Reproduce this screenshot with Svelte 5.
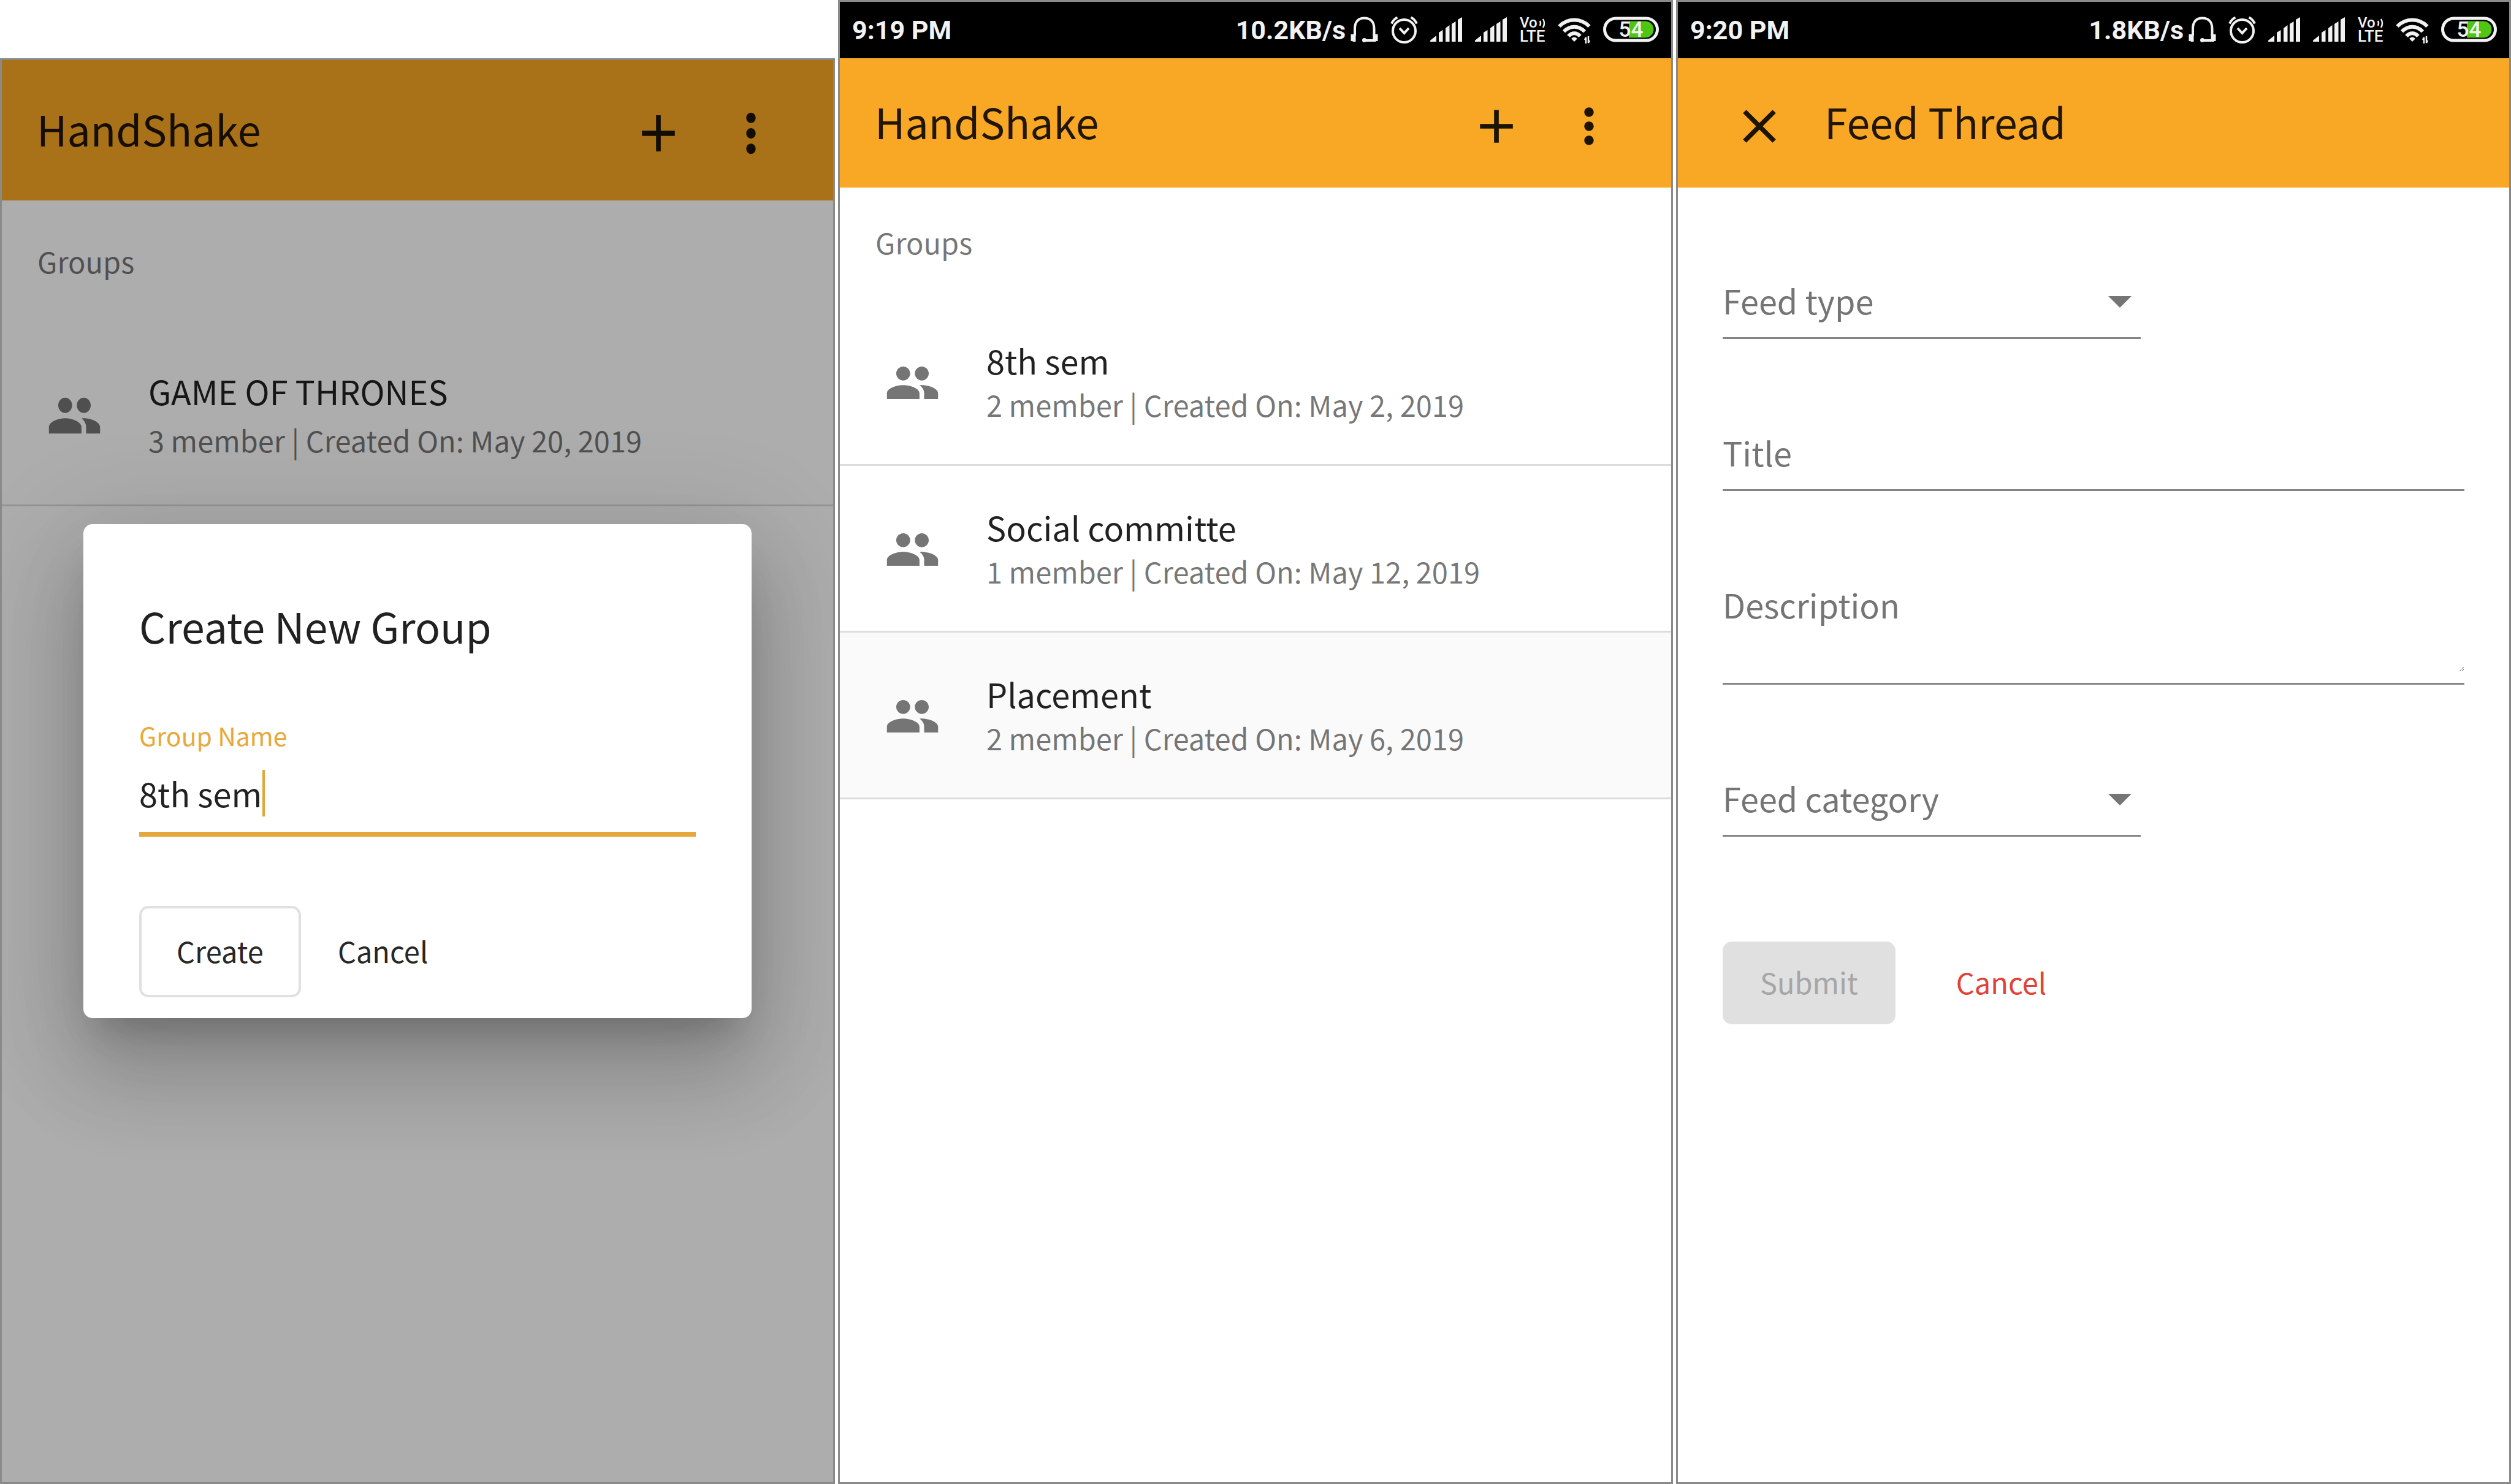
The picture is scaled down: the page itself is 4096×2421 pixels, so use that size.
<script>
  let groupName = $state('8th sem');
  let feedTitle = $state('');
  let description = $state('');

  const dialogGroups = [
    { name: 'GAME OF THRONES', members: 3, created: 'May 20, 2019' }
  ];

  const groups = [
    { name: '8th sem', members: 2, created: 'May 2, 2019' },
    { name: 'Social committe', members: 1, created: 'May 12, 2019' },
    { name: 'Placement', members: 2, created: 'May 6, 2019', active: true }
  ];
</script>

{#snippet statusBar(time, speed)}
  <div class="status">
    <span class="clock">{time}</span>
    <div class="tray">
      <span class="speed">{speed}</span>
      <svg width="45" height="46" viewBox="0 0 45 46" fill="none" stroke="#f2f2f2" stroke-width="4" aria-hidden="true">
        <path d="M7 32V21C7 9 13 3.500 22.500 3.500S38.500 9 38.500 21V32" />
        <path d="M2.500 30V41M42.500 30V41" />
        <path d="M6 30V42M39 30V42" stroke-width="5" />
        <path d="M22 40H38" />
        <circle cx="22.500" cy="39.500" r="3.500" fill="#f2f2f2" stroke="none" />
      </svg>
      <svg width="45" height="46" viewBox="0 0 45 46" fill="none" stroke="#f2f2f2" stroke-width="4" aria-hidden="true">
        <circle cx="22.500" cy="24.500" r="18.500" />
        <path d="M15 20L22.500 28L30 20" />
        <path d="M2 12.500C4 8 7 4.500 11.500 2.500M43 12.500C41 8 38 4.500 33.500 2.500" />
      </svg>
      {#each [0, 1] as sim (sim)}
        <svg width="53" height="46" viewBox="0 0 53 46" fill="#f2f2f2" aria-hidden="true">
          <path d="M0 42V40L10 32V42ZM14 42V27L20.500 23V42ZM25 42V20L31.500 15V42ZM35 42V13L41.500 9V42ZM45 42V6L52 2V42Z" />
        </svg>
      {/each}
      <svg class="volte" width="42" height="46" viewBox="0 0 42 46" fill="#f2f2f2" aria-hidden="true">
        <text x="0" y="19" font-size="24">Vo</text>
        <text x="0" y="42" font-size="26">LTE</text>
        <path d="M33 8Q35 12 33 16M38 5Q42 12 38 19" fill="none" stroke="#f2f2f2" stroke-width="2.500" />
      </svg>
      <svg width="54" height="46" viewBox="0 0 54 46" fill="none" stroke="#f2f2f2" stroke-width="6" aria-hidden="true">
        <path d="M2.500 17C16 3 38 3 51.500 17" />
        <path d="M10 25.500C20 15 34 15 44 25.500" />
        <path d="M17.500 33C23 26.500 31 26.500 36.500 33" />
        <path d="M27 42L22 37Q27 32 32 37Z" fill="#f2f2f2" stroke="none" />
        <path d="M44 39L46 35V45M50 33V44L52 40" stroke-width="2.500" />
      </svg>
      <svg class="battery" width="91" height="46" viewBox="0 0 91 46" aria-hidden="true">
        <path d="M42 8.500H69A13.500 13.500 0 0 1 69 35.500H42Z" fill="#4fc614" />
        <rect x="2.500" y="4" width="86" height="36" rx="18" fill="none" stroke="#f2f2f2" stroke-width="5" />
        <text x="45.500" y="34" text-anchor="middle" font-size="35" fill="#f2f2f2">54</text>
      </svg>
    </div>
  </div>
{/snippet}

{#snippet appBar()}
  <header class="appbar">
    <h1>HandShake</h1>
    <div class="actions">
      <button class="icon-button" aria-label="Add group">
        <svg class="glyph" viewBox="0 0 24 24" preserveAspectRatio="none"><path d="M19 13h-6v6h-2v-6H5v-2h6V5h2v6h6v2z" /></svg>
      </button>
      <button class="icon-button" aria-label="More options">
        <svg class="glyph" viewBox="0 0 24 24" preserveAspectRatio="none"><path d="M12 8c1.100 0 2-.9 2-2s-.9-2-2-2-2 .9-2 2 .9 2 2 2zm0 2c-1.100 0-2 .9-2 2s.9 2 2 2 2-.9 2-2-.9-2-2-2zm0 6c-1.100 0-2 .9-2 2s.9 2 2 2 2-.9 2-2-.9-2-2-2z" /></svg>
      </button>
    </div>
  </header>
{/snippet}

{#snippet groupList(items)}
  <h2 class="subheader">Groups</h2>
  <ul class="list">
    {#each items as g (g.name)}
      <li class="row" class:active={g.active}>
        <svg class="people" viewBox="0 0 24 24" preserveAspectRatio="none" aria-hidden="true"><path d="M16 11c1.660 0 2.990-1.340 2.990-3S17.660 5 16 5c-1.660 0-3 1.340-3 3s1.340 3 3 3zm-8 0c1.660 0 2.990-1.340 2.990-3S9.660 5 8 5C6.340 5 5 6.340 5 8s1.340 3 3 3zm0 2c-2.330 0-7 1.170-7 3.500V19h14v-2.500c0-2.330-4.670-3.500-7-3.500zm8 0c-.29 0-.62.020-.97.050 1.160.84 1.970 1.970 1.970 3.450V19h6v-2.500c0-2.330-4.670-3.500-7-3.500z" /></svg>
        <div class="row-text">
          <span class="name">{g.name}</span>
          <span class="meta">{g.members} member | Created On: {g.created}</span>
        </div>
      </li>
    {/each}
  </ul>
{/snippet}

{#snippet arrow()}
  <svg class="arrow" viewBox="0 0 38 24" aria-hidden="true"><path d="M0 5H38L19 24Z" fill="#757575" /></svg>
{/snippet}

<main class="board">
  <section class="screen tall">
    {@render appBar()}
    {@render groupList(dialogGroups)}
    <div class="backdrop">
      <form class="dialog" onsubmit={(e) => e.preventDefault()}>
        <h2>Create New Group</h2>
        <label for="group-name">Group Name</label>
        <div class="name-field">
          <input id="group-name" type="text" bind:value={groupName} />
          <span class="caret"></span>
        </div>
        <div class="dialog-actions">
          <button class="outlined" type="submit">Create</button>
          <button type="button">Cancel</button>
        </div>
      </form>
    </div>
  </section>

  <section class="screen">
    {@render statusBar('9:19 PM', '10.2KB/s')}
    {@render appBar()}
    {@render groupList(groups)}
  </section>

  <section class="screen">
    {@render statusBar('9:20 PM', '1.8KB/s')}
    <header class="appbar">
      <button class="icon-button" aria-label="Close">
        <svg class="glyph" viewBox="0 0 24 24"><path d="M19 6.410L17.590 5 12 10.590 6.410 5 5 6.410 10.590 12 5 17.590 6.410 19 12 13.410 17.590 19 19 17.590 13.410 12z" /></svg>
      </button>
      <h1 class="after-icon">Feed Thread</h1>
    </header>
    <form class="feed" onsubmit={(e) => e.preventDefault()}>
      <div class="field half">
        <select aria-label="Feed type"><option>Feed type</option></select>
        {@render arrow()}
      </div>
      <div class="field">
        <input type="text" aria-label="Title" placeholder="Title" bind:value={feedTitle} />
      </div>
      <div class="field">
        <textarea aria-label="Description" placeholder="Description" bind:value={description}></textarea>
      </div>
      <div class="field half">
        <select aria-label="Feed category"><option>Feed category</option></select>
        {@render arrow()}
      </div>
      <div class="feed-actions">
        <button class="submit" type="submit" disabled>Submit</button>
        <button class="cancel" type="button">Cancel</button>
      </div>
    </form>
  </section>
</main>

<style>
  :global(body) {
    margin: 0;
    background: #fff;
  }

  .board {
    box-sizing: border-box;
    display: grid;
    grid-template-columns: repeat(3, minmax(0, 1fr));
    gap: 5px;
    min-height: 100vh;
    font-family: 'Noto Sans CJK SC', 'Noto Sans', sans-serif;
    color: rgba(0, 0, 0, 0.87);
  }

  h1,
  h2,
  ul {
    margin: 0;
    padding: 0;
    font-weight: 400;
  }

  button,
  input,
  select,
  textarea {
    box-sizing: border-box;
    margin: 0;
    padding: 0;
    border: 0;
    border-radius: 0;
    outline: 0;
    background: none;
    font: inherit;
    color: inherit;
    appearance: none;
  }

  .screen {
    --bar: 211px;
    --bar-top: 11px;
    --glyph-height: 92px;
    --title-shift: 17px;
    --header: 178px;
    --row: 272px;
    --line: 72px;
    --people-height: 91px;
    position: relative;
    border: 3px solid #8a8a8a;
    background: #fff;
    overflow: hidden;
  }

  .tall {
    --bar: 229px;
    --bar-top: 9px;
    --glyph-height: 101px;
    --title-shift: 15px;
    --header: 198px;
    --row: 297px;
    --line: 80px;
    --people-height: 100px;
    margin-top: 95px;
  }

  /* status bar */
  .status {
    display: flex;
    align-items: center;
    justify-content: space-between;
    height: 92px;
    padding: 0 20px;
    background: #000;
    color: #f2f2f2;
    font-family: Roboto, sans-serif;
    font-weight: 700;
    font-size: 43px;
    line-height: 60px;
  }

  .tray {
    display: flex;
    align-items: center;
    gap: 20px;
  }

  .speed {
    margin-right: -12px;
  }

  .volte,
  .battery {
    overflow: visible;
    font-family: Roboto, sans-serif;
    font-weight: 500;
  }

  /* app bar */
  .appbar {
    box-sizing: border-box;
    display: flex;
    align-items: center;
    height: var(--bar);
    padding: var(--bar-top) 59px 0 57px;
    background: #f9a825;
  }

  .appbar h1 {
    flex: 1;
    margin-bottom: var(--title-shift);
    font-size: 68px;
    line-height: 96px;
  }

  .appbar .after-icon {
    margin-left: 31px;
  }

  .actions {
    display: flex;
  }

  .icon-button {
    display: flex;
    align-items: center;
    justify-content: center;
    width: 151px;
    height: 151px;
  }

  .glyph {
    width: 92px;
    height: var(--glyph-height);
    fill: #1d1400;
  }

  /* group list */
  .subheader {
    padding: 0 58px 4px;
    font-size: 47px;
    line-height: var(--header);
    color: rgba(0, 0, 0, 0.54);
  }

  .list {
    list-style: none;
  }

  .row {
    box-sizing: border-box;
    display: flex;
    align-items: center;
    gap: 75px;
    height: var(--row);
    padding: 3px 73px 0;
    border-bottom: 3px solid #dcdcdc;
  }

  .active {
    background: #fafafa;
  }

  .people {
    width: 91px;
    height: var(--people-height);
    fill: #757575;
  }

  .row-text {
    display: flex;
    flex-direction: column;
    line-height: var(--line);
    white-space: nowrap;
  }

  .name {
    font-size: 54px;
  }

  .meta {
    font-size: 47px;
    color: rgba(0, 0, 0, 0.54);
  }

  /* dialog */
  .backdrop {
    position: absolute;
    inset: 0;
    display: flex;
    align-items: center;
    justify-content: center;
    background: rgba(0, 0, 0, 0.32);
  }

  .dialog {
    box-sizing: border-box;
    display: flex;
    flex-direction: column;
    width: calc(80% + 5px);
    padding: 91px 91px 34px;
    border-radius: 15px;
    background: #fff;
    box-shadow:
      0 42px 57px -26px rgba(0, 0, 0, 0.2),
      0 91px 144px 11px rgba(0, 0, 0, 0.14),
      0 34px 174px 30px rgba(0, 0, 0, 0.12);
  }

  .dialog h2 {
    font-size: 68px;
    line-height: 150px;
  }

  .dialog label {
    margin-top: 73px;
    font-size: 41px;
    line-height: 60px;
    color: #e9a83a;
  }

  .name-field {
    display: flex;
    margin-top: 27px;
    padding-bottom: 25px;
    border-bottom: 8px solid #e6a83a;
    font-size: 54px;
    line-height: 76px;
  }

  .name-field input {
    field-sizing: content;
    height: 76px;
  }

  .caret {
    width: 4px;
    height: 76px;
    background: #dfa83a;
  }

  .dialog-actions {
    display: flex;
    margin-top: 113px;
    font-size: 47px;
  }

  .dialog-actions button {
    height: 149px;
    padding: 0 60px 4px;
    border-radius: 15px;
  }

  .dialog-actions .outlined {
    padding: 0 57px 4px;
    border: 4px solid #e0e0e0;
  }

  /* feed form */
  .feed {
    display: flex;
    flex-direction: column;
    gap: 143px;
    padding: 142px 73px 0;
    font-size: 54px;
    line-height: 84px;
  }

  .field {
    display: flex;
    align-items: center;
    padding-bottom: 18px;
    border-bottom: 3px solid #858585;
    color: #757575;
  }

  .half {
    box-sizing: border-box;
    width: calc(56% + 4px);
    padding-right: 15px;
  }

  .field select,
  .field input,
  .field textarea {
    flex: 1;
    min-width: 0;
    height: 84px;
  }

  .field textarea {
    height: 152px;
    resize: vertical;
  }

  .field ::placeholder {
    color: #757575;
    opacity: 1;
  }

  .arrow {
    width: 38px;
    height: 24px;
  }

  .feed-actions {
    display: flex;
    gap: 38px;
    margin-top: 28px;
    font-size: 47px;
  }

  .feed-actions button {
    height: 135px;
    padding: 0 61px 4px;
    border-radius: 15px;
  }

  .feed-actions .submit {
    background: #e0e0e0;
    color: #a6a6a6;
  }

  .feed-actions .cancel {
    color: #e04238;
  }
</style>
